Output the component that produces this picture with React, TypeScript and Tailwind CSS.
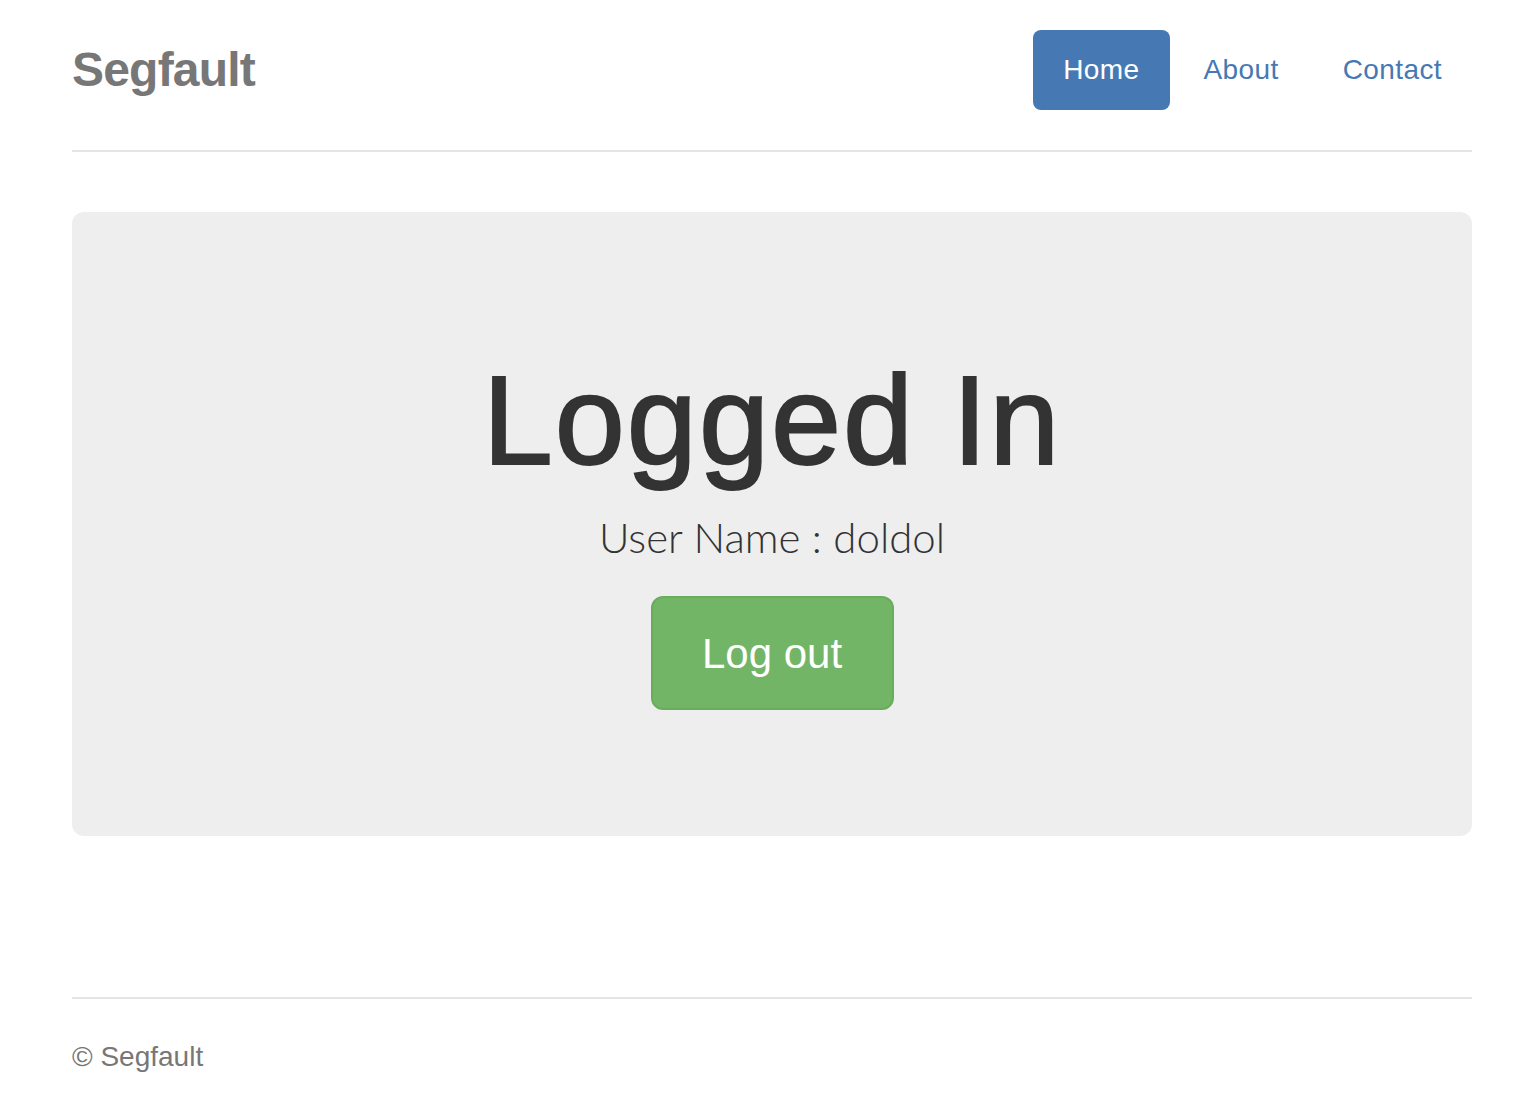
const navItems = [
  { label: "Home", active: true },
  { label: "About", active: false },
  { label: "Contact", active: false },
];

function Header() {
  return (
    <div className="flex items-center justify-between border-b-2 border-[#e5e5e5] pt-[30px] pb-[40px]">
      <h3 className="m-0 text-[48px] font-bold leading-[80px] tracking-[-0.8px] text-[#777]">
        Segfault
      </h3>
      <ul className="flex gap-[4px]">
        {navItems.map((item) => (
          <li key={item.label}>
            <a
              href="#"
              className={
                item.active
                  ? "block rounded-[8px] bg-[#4679b3] px-[30px] py-[20px] text-[28px] leading-[40px] tracking-[0.4px] text-white"
                  : "block rounded-[8px] px-[30px] py-[20px] text-[28px] leading-[40px] tracking-[0.4px] text-[#4679b3]"
              }
            >
              {item.label}
            </a>
          </li>
        ))}
      </ul>
    </div>
  );
}

function Jumbotron() {
  return (
    <div className="mt-[60px] rounded-[12px] bg-[#eeeeee] pt-[140px] pb-[126px] text-center text-[#333]">
      <h1 className="m-0 text-[126px] leading-[138px] font-normal tracking-[2px] [-webkit-text-stroke:2px_#333]">
        Logged In
      </h1>
      <p className="mt-[18px] font-['Lato',sans-serif] text-[42px] leading-[58px] font-light">
        User Name : doldol
      </p>
      <div className="mt-[30px] flex justify-center">
        <button className="flex h-[114px] w-[243px] items-center justify-center rounded-[12px] border-2 border-[#69ad5c] bg-[#73b566] text-[42px] text-white">
          Log out
        </button>
      </div>
    </div>
  );
}

export default function App() {
  return (
    <div className="min-h-screen bg-white font-['Liberation_Sans',Arial,sans-serif]">
      <div className="ml-[72px] w-[1400px]">
        <Header />
        <Jumbotron />
        <footer className="mt-[161px] border-t-2 border-[#e5e5e5] pt-[38px] pb-[30px]">
          <p className="text-[28px] leading-[40px] text-[#777]">© Segfault</p>
        </footer>
      </div>
    </div>
  );
}
